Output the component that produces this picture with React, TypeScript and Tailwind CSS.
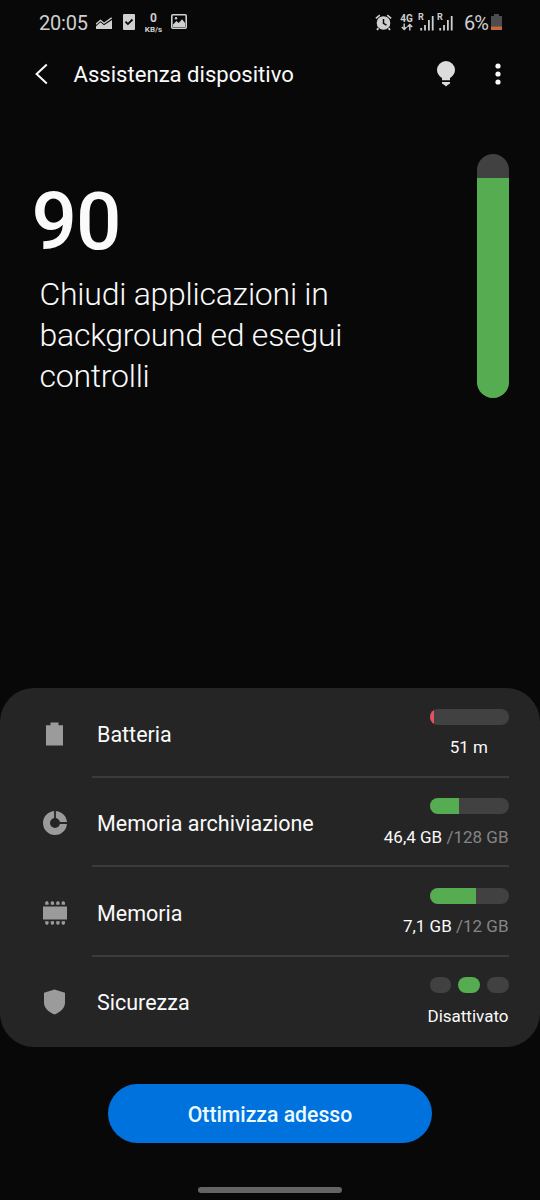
import { ReactNode } from 'react';

function AlarmIcon() {
  return (
    <svg className="w-[17px] h-[17px]" viewBox="0 0 16 16" fill="#cfcfcf">
      <path d="M0.3 3.6L4 0.5l1 1.2L1.3 4.8zM15.7 3.6L12 0.5l-1 1.2 3.7 3.1z" />
      <path d="M2.6 12.8l1.3 1.3-1.5 1.5-1.2-1.2zM13.4 12.8l-1.3 1.3 1.5 1.5 1.2-1.2z" />
      <circle cx="8" cy="8.4" r="6.4" />
      <path d="M8 4.8v4l2.8 1.7" fill="none" stroke="#080808" strokeWidth="1.4" />
    </svg>
  );
}

function SignalIcon() {
  return (
    <div className="relative w-4 h-4">
      <span className="absolute -left-[1px] -top-[2px] text-[9px] leading-[9px] font-bold">R</span>
      <svg className="w-4 h-4" viewBox="0 0 16 16" fill="#cfcfcf">
        <rect x="1.3" y="13" width="1.8" height="2.5" />
        <rect x="5.1" y="10" width="1.8" height="5.5" />
        <rect x="9" y="5" width="1.8" height="10.5" />
        <rect x="12.8" y="1" width="1.8" height="14.5" />
      </svg>
    </div>
  );
}

function StatusBar() {
  return (
    <div className="flex items-center justify-between h-[45px] pl-[39px] pr-[38px] text-[#cfcfcf]">
      <div className="flex items-center">
        <span className="w-[49px] text-[20px] leading-none tracking-[-0.2px]">20:05</span>
        <svg className="ml-2 w-4 h-3" viewBox="0 0 16 12">
          <path d="M0 12V9.2l4.5-4 3.5 3L16 3v9z" fill="#cfcfcf" />
          <path d="M0 7.2L4.5 3.3 8 6.2 15.7 0.8" fill="none" stroke="#cfcfcf" strokeWidth="1.4" />
        </svg>
        <svg className="ml-[11px] w-3 h-4 -translate-y-[1px]" viewBox="0 0 12 16">
          <rect width="12" height="16" rx="1" fill="#cfcfcf" />
          <path d="M2.4 7.6l2.5 2.5 4.6-4.6" fill="none" stroke="#080808" strokeWidth="1.8" />
        </svg>
        <div className="ml-[9px] w-[19px] flex flex-col items-center font-bold">
          <span className="text-[12px] leading-[13px]">0</span>
          <span className="text-[8px] leading-[9px] whitespace-nowrap">KB/s</span>
        </div>
        <svg className="ml-2 w-4 h-[15px] -translate-y-[1px]" viewBox="0 0 16 15">
          <rect x="0.8" y="0.8" width="14.4" height="13.4" rx="1" fill="none" stroke="#cfcfcf" strokeWidth="1.6" />
          <path d="M2 10.5L5.5 7l2.2 2 3.4-3.8L14 9v4H2z" fill="#cfcfcf" />
          <circle cx="5" cy="4.2" r="1.2" fill="#cfcfcf" />
        </svg>
      </div>

      <div className="flex items-center">
        <AlarmIcon />
        <div className="ml-2 w-[13px] flex flex-col items-center">
          <span className="text-[10px] leading-[9px] font-bold">4G</span>
          <svg className="w-3 h-2" viewBox="0 0 12 7" fill="none" stroke="#cfcfcf" strokeWidth="1.4">
            <path d="M3.2 0v5.6M0.8 3.6l2.4 2.4 2.4-2.4M8.8 7V1.2M6.4 3.4L8.8 1l2.4 2.4" />
          </svg>
        </div>
        <div className="ml-[6px] flex gap-[3px]">
          <SignalIcon />
          <SignalIcon />
        </div>
        <span className="ml-[10px] w-[26px] text-[20px] leading-none tracking-[-1px]">6%</span>
        <svg className="ml-[1px] w-[11px] h-4 -translate-y-[1px]" viewBox="0 0 11 16">
          <path d="M3 0h5v2h3v14H0V2h3z" fill="#4d4d4d" />
          <rect y="12.6" width="11" height="3.4" fill="#c9683f" />
        </svg>
      </div>
    </div>
  );
}

function Header() {
  return (
    <header className="flex items-center h-[58px] pl-[34px] pr-[39px]">
      <svg className="w-4 h-[22px]" viewBox="0 0 16 22" fill="none" stroke="#fafafa" strokeWidth="2">
        <path d="M12.8 1.5L2.6 11l10.2 9.5" />
      </svg>
      <h1 className="ml-[23.5px] pt-[1px] text-[22.1px] leading-none text-[#fafafa]">Assistenza dispositivo</h1>
      <svg className="ml-auto w-[18px] h-[26px]" viewBox="0 0 18 26" fill="#dcdcdc">
        <path d="M9 0a9 9 0 0 0-9 9c0 3.6 2.1 6 5 8v2.2h8V17c2.9-2 5-4.4 5-8a9 9 0 0 0-9-9z" />
        <path d="M5 21h8v1.6l-2.4 1.4L9 25.5 7.4 24 5 22.6z" />
      </svg>
      <svg className="ml-10 w-[6px] h-[22px]" viewBox="0 0 6 22" fill="#fafafa">
        <circle cx="3" cy="3" r="2.6" />
        <circle cx="3" cy="11" r="2.6" />
        <circle cx="3" cy="19" r="2.6" />
      </svg>
    </header>
  );
}

function Bar({ value, color }: { value: number; color: string }) {
  return (
    <div className="w-[79px] h-4 rounded-full bg-[#414141] overflow-hidden">
      <div className={`h-full ${color}`} style={{ width: `${value}%` }} />
    </div>
  );
}

function Usage({ used, total }: { used: string; total: string }) {
  return (
    <>
      {used} <span className="text-[#858585]">/{total}</span>
    </>
  );
}

function Row({ icon, label, meter, children, last = false }: { icon: ReactNode; label: string; meter: ReactNode; children: ReactNode; last?: boolean }) {
  return (
    <div className="flex h-[89.5px] pr-[31.5px]">
      <div className="w-[91.5px] pl-[42.7px] flex items-center pt-[2px]">{icon}</div>
      <div className={`flex-1 flex items-center justify-between pl-[5.5px] border-b-2 ${last ? 'border-transparent' : 'border-[#3b3b3b]'}`}>
        <span className="pt-[5px] text-[21.5px] leading-none text-[#fafafa]">{label}</span>
        <div className="flex flex-col items-end pt-[1px]">
          {meter}
          <span className="mt-[13.5px] text-[17px] leading-[18px] text-[#fafafa] whitespace-nowrap">{children}</span>
        </div>
      </div>
    </div>
  );
}

const pins = [2.2, 7.7, 13.2, 18.6];

export default function App() {
  return (
    <div className="w-[540px] h-[1200px] flex flex-col bg-[#080808] overflow-hidden font-['Roboto',sans-serif]">
      <StatusBar />
      <Header />

      {/* Score */}
      <section className="flex justify-between h-[585px] pt-[51px] pl-[31.5px] pr-[31px]">
        <div className="text-[#fafafa]">
          <p className="pt-[28px] text-[80px] leading-[80px] font-medium tracking-[-1px]">90</p>
          <p className="mt-[12px] pl-[8px] w-[340px] text-[32px] leading-[41px] font-light tracking-[-0.25px]">
            Chiudi applicazioni in background ed esegui controlli
          </p>
        </div>
        <div className="w-8 h-[244px] rounded-full bg-[#414141] overflow-hidden flex items-end">
          <div className="w-full bg-[#56ad51]" style={{ height: '90%' }} />
        </div>
      </section>

      {/* Categories */}
      <section className="h-[359px] rounded-[34px] bg-[#252525]">
        <Row
          icon={
            <svg className="ml-[3px] w-[17px] h-6" viewBox="0 0 17 24" fill="#9b9b9b">
              <path d="M4.5 0.5h8v2.7H17V23.5H0V3.2h4.5z" />
            </svg>
          }
          label="Batteria"
          meter={<Bar value={6} color="bg-[#e8505f]" />}
        >
          <span className="mr-[20.5px]">51 m</span>
        </Row>
        <Row
          icon={
            <svg className="w-6 h-6" viewBox="0 0 24 24" fill="none" stroke="#9b9b9b" strokeWidth="7">
              <circle cx="12" cy="12" r="8.5" />
              <path d="M12 0v8M16 12h8" stroke="#252525" strokeWidth="1.8" />
            </svg>
          }
          label="Memoria archiviazione"
          meter={<Bar value={37} color="bg-[#56ad51]" />}
        >
          <Usage used="46,4 GB" total="128 GB" />
        </Row>
        <Row
          icon={
            <svg className="w-6 h-6" viewBox="0 0 24 24" fill="#9b9b9b">
              <rect y="5.5" width="24" height="13" />
              {pins.map((x) => (
                <path key={x} d={`M${x} 3.7V1.5l1-1.3h1.4l1 1.3v2.2zM${x} 20.3v2.2l1 1.3h1.4l1-1.3v-2.2z`} />
              ))}
            </svg>
          }
          label="Memoria"
          meter={<Bar value={59} color="bg-[#56ad51]" />}
        >
          <Usage used="7,1 GB" total="12 GB" />
        </Row>
        <Row
          icon={
            <svg className="ml-[1px] w-[21px] h-[26px]" viewBox="0 0 21 26" fill="#9b9b9b">
              <path d="M10.5 0.5L21 3.7v9.8c0 5.3-4.2 9.6-10.5 12C4.2 23.1 0 18.8 0 13.5V3.7z" />
            </svg>
          }
          label="Sicurezza"
          meter={
            <div className="flex justify-between w-[79px]">
              <span className="w-[21px] h-4 rounded-full bg-[#414141]" />
              <span className="w-[22px] h-4 rounded-full bg-[#56ad51]" />
              <span className="w-[22px] h-4 rounded-full bg-[#414141]" />
            </div>
          }
          last
        >
          Disattivato
        </Row>
      </section>

      <button className="mt-[37px] mx-auto w-[324px] h-[59px] pt-[2px] shrink-0 rounded-full bg-[#0072de] text-[21.2px] font-medium text-[#eafaff]">
        Ottimizza adesso
      </button>

      {/* Gesture handle */}
      <div className="mt-[44px] mx-auto w-[144px] h-[6px] shrink-0 rounded-full bg-[#646464]" />
    </div>
  );
}
